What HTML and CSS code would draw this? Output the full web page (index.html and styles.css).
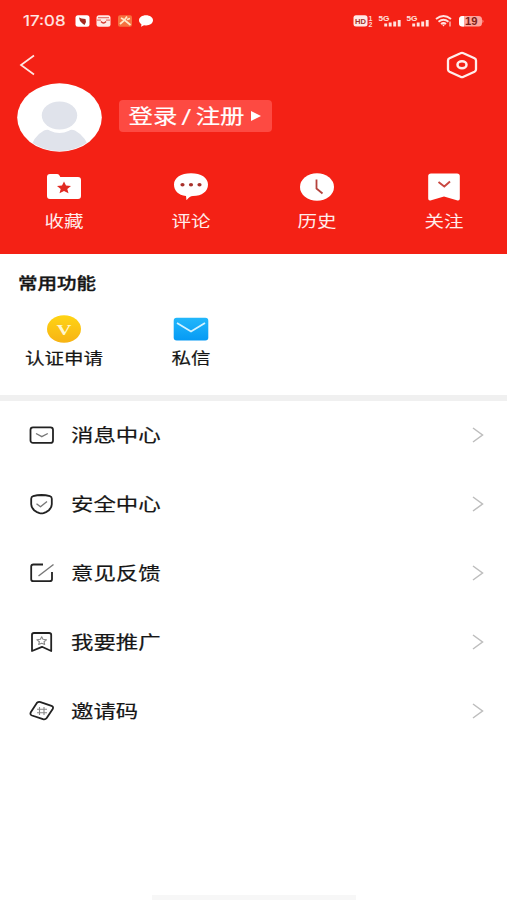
FILE: index.html
```html
<!DOCTYPE html>
<html lang="zh-CN">
<head>
<meta charset="utf-8">
<title>我的</title>
<link rel="stylesheet" href="styles.css">
</head>
<body>
<div class="screen">
  <header class="hero">
    <div class="status">
      <span class="clock"><span class="wide">17:08</span></span>
      <svg class="apps" width="80" height="16" viewBox="0 0 80 16">
        <rect x="0.5" y="2.2" width="14" height="11.6" rx="2.5" fill="#fff"/>
        <path d="M4 4.500l2.500 1 4 .5.500 3-1.500 3-2-1.500-2.500-2.500z" fill="#a52a22"/>
        <rect x="21.5" y="2.2" width="14" height="11.6" rx="2.5" fill="#ffe9e6"/>
        <path d="M23 4.6h11M22 7.2h4M31 7.2h4" stroke="#e8776e" stroke-width="1.2"/>
        <path d="M26 8.5q2.5 3 5 0" fill="none" stroke="#d63a30" stroke-width="1.4"/>
        <rect x="43" y="2.2" width="14" height="11.6" rx="2" fill="#f6713f"/>
        <path d="M46 5l3.500 2 2.500-3.500M45 11l4.500-4 3 2.500 3 2.500M52 6.500l3-1" fill="none" stroke="#ffe8c8" stroke-width="1.7"/>
        <path d="M71 2.2c4 0 7 2.200 7 5.100s-3 5.100-7 5.100l-2-.2-3 1.600.5-2.400C65 10.500 64 9 64 7.300c0-2.900 3-5.100 7-5.100z" fill="#fff"/>
      </svg>
      <svg class="signals" width="132" height="16" viewBox="0 0 132 16">
        <rect x="0.500" y="2.300" width="14" height="11.200" rx="2.500" fill="#ffe9e6"/>
        <text class="hd" x="2" y="10.800" textLength="11" lengthAdjust="spacingAndGlyphs">HD</text>
        <text class="tiny" x="15.500" y="7.600">1</text>
        <text class="tiny" x="15.500" y="14">2</text>
        <text class="gen" x="25.500" y="7.500" textLength="11" lengthAdjust="spacingAndGlyphs">5G</text>
        <path d="M32.700 13.500v-3M37.200 13.500v-4M41.700 13.500v-5M46.200 13.500v-6.500" stroke="#ffe2df" stroke-width="2.900"/>
        <text class="gen" x="53.500" y="7.500" textLength="11" lengthAdjust="spacingAndGlyphs">5G</text>
        <path d="M60.700 13.500v-3M65.200 13.500v-4M69.700 13.500v-5M74.200 13.500v-6.500" stroke="#ffe2df" stroke-width="2.900"/>
        <path d="M83 6q7.500-6 15 0M85.500 8.700q5-4 10 0M88 11q2.500-2 5 0" fill="none" stroke="#ffe2df" stroke-width="1.900"/>
        <path d="M89 11.500h3l-1.500 2z" fill="#ffe2df"/><path d="M97 8.500v5" stroke="#ffb0a8" stroke-width="1.500"/>
        <rect x="106" y="3" width="23" height="10.600" rx="3.500" fill="#ffa49c"/>
        <path d="M111 3h-1.500Q106 3 106 6.500v3.600q0 3.500 3.500 3.500H111z" fill="#fff"/>
        <path d="M129.500 6.500q2 1.800 0 3.600z" fill="#ffa49c"/>
        <text class="charge" x="112" y="12" textLength="12.500" lengthAdjust="spacingAndGlyphs">19</text>
      </svg>
    </div>
    <div class="tools">
      <svg width="17" height="22" viewBox="0 0 17 22"><path d="M15 1.500L2 11l13 9.500" fill="none" stroke="#ffe6e3" stroke-width="1.700"/></svg>
      <svg width="32" height="28" viewBox="0 0 32 28"><path d="M14.500 2.300q1.500-.8 3 0l11 5q1.500.8 1.500 2.200v9q0 1.400-1.500 2.200l-11 5q-1.500.8-3 0l-11-5Q2 19.900 2 18.500v-9q0-1.400 1.500-2.200z" fill="none" stroke="#ffeeec" stroke-width="2.300"/><ellipse cx="16" cy="13.800" rx="4.500" ry="3.500" fill="none" stroke="#ffeeec" stroke-width="2.500"/></svg>
    </div>
    <div class="profile">
      <svg width="85" height="69" viewBox="0 0 85 69">
        <defs><clipPath id="face"><ellipse cx="42.500" cy="34.500" rx="41.500" ry="33.500"/></clipPath></defs>
        <ellipse cx="42.500" cy="34.500" rx="42.300" ry="34.200" fill="#fff"/>
        <g clip-path="url(#face)" fill="#e0e3eb"><ellipse cx="42.500" cy="32.500" rx="17.700" ry="14"/><path d="M13 69q2-15 14-21.500 4-1.500 6 .3 9.500 4.500 19 0 2-1.800 6-.3Q70 54 73 69z"/></g>
      </svg>
      <a class="login"><span class="wide">登录<span class="slash">/</span>注册</span><svg width="10" height="10" viewBox="0 0 10 10"><path d="M0 0l10 5-10 5z" fill="#fff"/></svg></a>
    </div>
    <nav class="grid shortcuts">
      <a class="cell"><svg width="36" height="30" viewBox="0 0 36 30"><path d="M4 2h7q1.500 0 2.300 1.200l1 1.800H32q3 0 3 3v16q0 3-3 3H4q-3 0-3-3V5q0-3 3-3z" fill="#fff"/><path d="M18 9.500l2 4 5 .5-3.700 3 1.200 4.300-4.500-2.200-4.500 2.200 1.200-4.300-3.700-3 5-.5z" fill="#e12a22"/></svg><span class="wide">收藏</span></a>
      <a class="cell"><svg width="36" height="30" viewBox="0 0 36 30"><path d="M18 1.200c10 0 17 4.500 17 11.300S29 24 20 24c-2.500 0-4 1-6.500 4.300L13 24C5 23 1 18.500 1 12.500 1 5.700 8 1.200 18 1.200z" fill="#fff"/><g fill="#a8312b"><ellipse cx="9.500" cy="12.800" rx="2.100" ry="1.800"/><ellipse cx="18" cy="12.800" rx="2.100" ry="1.800"/><ellipse cx="26.500" cy="12.800" rx="2.100" ry="1.800"/></g></svg><span class="wide">评论</span></a>
      <a class="cell"><svg width="36" height="30" viewBox="0 0 36 30"><ellipse cx="18" cy="15" rx="17" ry="13.800" fill="#fff"/><path d="M17.500 7.500v9l6 5" fill="none" stroke="#b5423c" stroke-width="1.800"/></svg><span class="wide">历史</span></a>
      <a class="cell"><svg width="36" height="30" viewBox="0 0 36 30"><path d="M5 1.500h26q2.800 0 2.800 2.500v22.500q0 2.700-3 1.800L18 24.500 5.200 28.300q-3 .9-3-1.800V4Q2.200 1.500 5 1.500z" fill="#fff"/><path d="M12.500 10l5.800 4.500L24 9.500" fill="none" stroke="#c94740" stroke-width="1.900"/></svg><span class="wide">关注</span></a>
    </nav>
  </header>

  <section class="common">
    <h2><span class="wide left">常用功能</span></h2>
    <div class="grid">
      <a class="cell"><svg width="36" height="28" viewBox="0 0 36 28"><defs><linearGradient id="gold" x2="0" y2="1"><stop stop-color="#ffd414"/><stop offset="1" stop-color="#f7b314"/></linearGradient></defs><ellipse cx="18" cy="14" rx="17" ry="13.800" fill="url(#gold)"/><text class="vee" x="10.500" y="20" textLength="15" lengthAdjust="spacingAndGlyphs">V</text></svg><span class="wide">认证申请</span></a>
      <a class="cell"><svg width="36" height="28" viewBox="0 0 36 28"><defs><linearGradient id="sky" x2="0" y2="1"><stop stop-color="#22b7fb"/><stop offset="1" stop-color="#069af4"/></linearGradient></defs><rect x="0.700" y="2.700" width="34.600" height="22.800" rx="3" fill="url(#sky)"/><path d="M4 8l14 8.500L32 8" fill="none" stroke="#d4f3ff" stroke-width="1.800"/></svg><span class="wide">私信</span></a>
    </div>
  </section>

  <main class="menu">
    <a class="row"><svg class="icon" width="26" height="22" viewBox="0 0 26 22"><rect x="1.500" y="3.300" width="22.500" height="15.600" rx="2.500"/><path class="fine" d="M7 9.500l5.800 3.200 6-3.200"/></svg><span class="wide left">消息中心</span><svg class="go" width="12" height="16" viewBox="0 0 12 16"><path d="M1 1l9.500 7L1 15"/></svg></a>
    <a class="row"><svg class="icon" width="26" height="22" viewBox="0 0 26 22"><path d="M12.500 2q4.500.1 8.300 1.200 2 .6 2 2.500v5.500q0 5-5.800 7.900l-2.500 1q-2 .6-4 0l-2.500-1q-5.800-2.900-5.800-7.900V5.700q0-1.900 2-2.500Q8 2.100 12.500 2z"/><path class="fine" d="M7.500 10.800l4 3L18 8.500"/></svg><span class="wide left">安全中心</span><svg class="go" width="12" height="16" viewBox="0 0 12 16"><path d="M1 1l9.500 7L1 15"/></svg></a>
    <a class="row"><svg class="icon" width="26" height="22" viewBox="0 0 26 22"><path d="M14 2.500H4.500q-2.300 0-2.300 2v12.700q0 2 2.300 2h16q2.500 0 2.500-2V10"/><path class="fine" d="M9.500 14L24.500 2.500"/></svg><span class="wide left">意见反馈</span><svg class="go" width="12" height="16" viewBox="0 0 12 16"><path d="M1 1l9.500 7L1 15"/></svg></a>
    <a class="row"><svg class="icon" width="26" height="22" viewBox="0 0 26 22"><path d="M5 2h15q2.200 0 2.200 1.800V20L13 15.800 3 20V3.800Q3 2 5 2z"/><path class="fine thin" d="M12.700 5.800l1.300 2.500 3.500.4-2.500 2 .7 2.800-3-1.300-3 1.300.7-2.800-2.500-2 3.500-.4z"/></svg><span class="wide left">我要推广</span><svg class="go" width="12" height="16" viewBox="0 0 12 16"><path d="M1 1l9.500 7L1 15"/></svg></a>
    <a class="row"><svg class="icon" width="26" height="22" viewBox="0 0 26 22"><path d="M8 2.800q1.500-1.300 3.500-.7L22.500 5.800q2.400 1 1.200 3.200l-6 9q-1.400 1.900-3.700 1.200L3 15.500q-2.400-1-1.200-3.200z"/><path class="fine thin" d="M10.500 7v8M15 7v8M8 9.200h10M8 12.800h10"/></svg><span class="wide left">邀请码</span><svg class="go" width="12" height="16" viewBox="0 0 12 16"><path d="M1 1l9.500 7L1 15"/></svg></a>
  </main>
  <div class="handle"></div>
</div>
</body>
</html>
```
FILE: styles.css
```css
* { box-sizing: border-box; }
body {
  margin: 0;
  background: #fff;
  color: #161616;
  font-family: Roboto, "Noto Sans CJK SC", sans-serif;
}
svg { display: block; flex: none; }
.screen {
  width: 507px;
  height: 900px;
  display: flex;
  flex-direction: column;
  overflow: hidden;
}
/* Glyphs are drawn wider than tall throughout the screen. */
.wide {
  display: inline-block;
  white-space: nowrap;
  transform: scaleX(1.22);
  -webkit-text-stroke: 0.2px currentColor;
}
.left { transform-origin: left center; }

.hero { height: 254px; background: #f42115; color: #fff; }
.status { display: flex; align-items: center; height: 42px; padding: 0 22px 0 23px; }
.clock { width: 52px; font-family: Inter, sans-serif; font-size: 14.2px; line-height: 16px; color: #ffe9e6; }
.clock .wide { transform: scaleX(1.21); transform-origin: left center; }
.signals { margin-left: auto; }
.hd { font: bold 8px "Liberation Sans", sans-serif; fill: #a3322b; }
.tiny { font: bold 7px "Liberation Sans", sans-serif; fill: #ffd6d2; }
.gen { font: bold 8px "Liberation Sans", sans-serif; fill: #ffe2df; }
.charge { font: bold 10px "Liberation Sans", sans-serif; fill: #7c1f1a; }
.tools { display: flex; align-items: center; justify-content: space-between; height: 41px; padding: 5px 29px 0 19px; }
.profile { display: flex; align-items: center; gap: 17px; height: 69px; padding-left: 17px; }
.login {
  display: flex;
  align-items: center;
  justify-content: space-between;
  width: 153px;
  height: 32px;
  margin-top: -4px;
  padding: 0 11px 0 20px;
  border-radius: 4px;
  background: #fd4a42;
  font-size: 20px;
  line-height: 30px;
}
.login .wide { padding-top: 2px; }
.slash { margin: 0 3.4px; }
.grid { display: grid; grid-template-columns: repeat(4, 1fr); padding-left: 1px; }
.shortcuts { padding-top: 20px; }
.cell { display: flex; flex-direction: column; align-items: center; font-size: 16px; line-height: 24px; }
.shortcuts .cell { gap: 8px; color: #ffeceb; }
.shortcuts .wide { -webkit-text-stroke-width: 0; }

.common { height: 147px; padding-top: 18px; border-bottom: 6px solid #f0f0f0; }
.common h2 { margin: 0 0 19px 18px; font-size: 16px; font-weight: 500; line-height: 24px; }
.common h2 .wide { -webkit-text-stroke-width: 0.35px; }
.common .cell { gap: 4px; }
.vee { font: bold 15px "Liberation Serif", serif; fill: #fff7d0; }

.menu { flex: 1; }
.row { display: flex; align-items: center; height: 69px; padding: 0 23px 0 29px; font-size: 18.4px; line-height: 28px; }
.row .wide { margin-left: 16px; padding-top: 1px; }
.row svg { margin-top: -1px; }
.icon { fill: none; stroke: #222; stroke-width: 1.8; stroke-linejoin: round; }
.fine { stroke: #777; stroke-width: 1.4; }
.thin { stroke: #888; stroke-width: 1.1; }
.row .go { margin-left: auto; fill: none; stroke: #bdbdbd; stroke-width: 1.5; }
.handle { width: 204px; height: 5px; margin: 0 auto; background: #f7f7f7; }
```
